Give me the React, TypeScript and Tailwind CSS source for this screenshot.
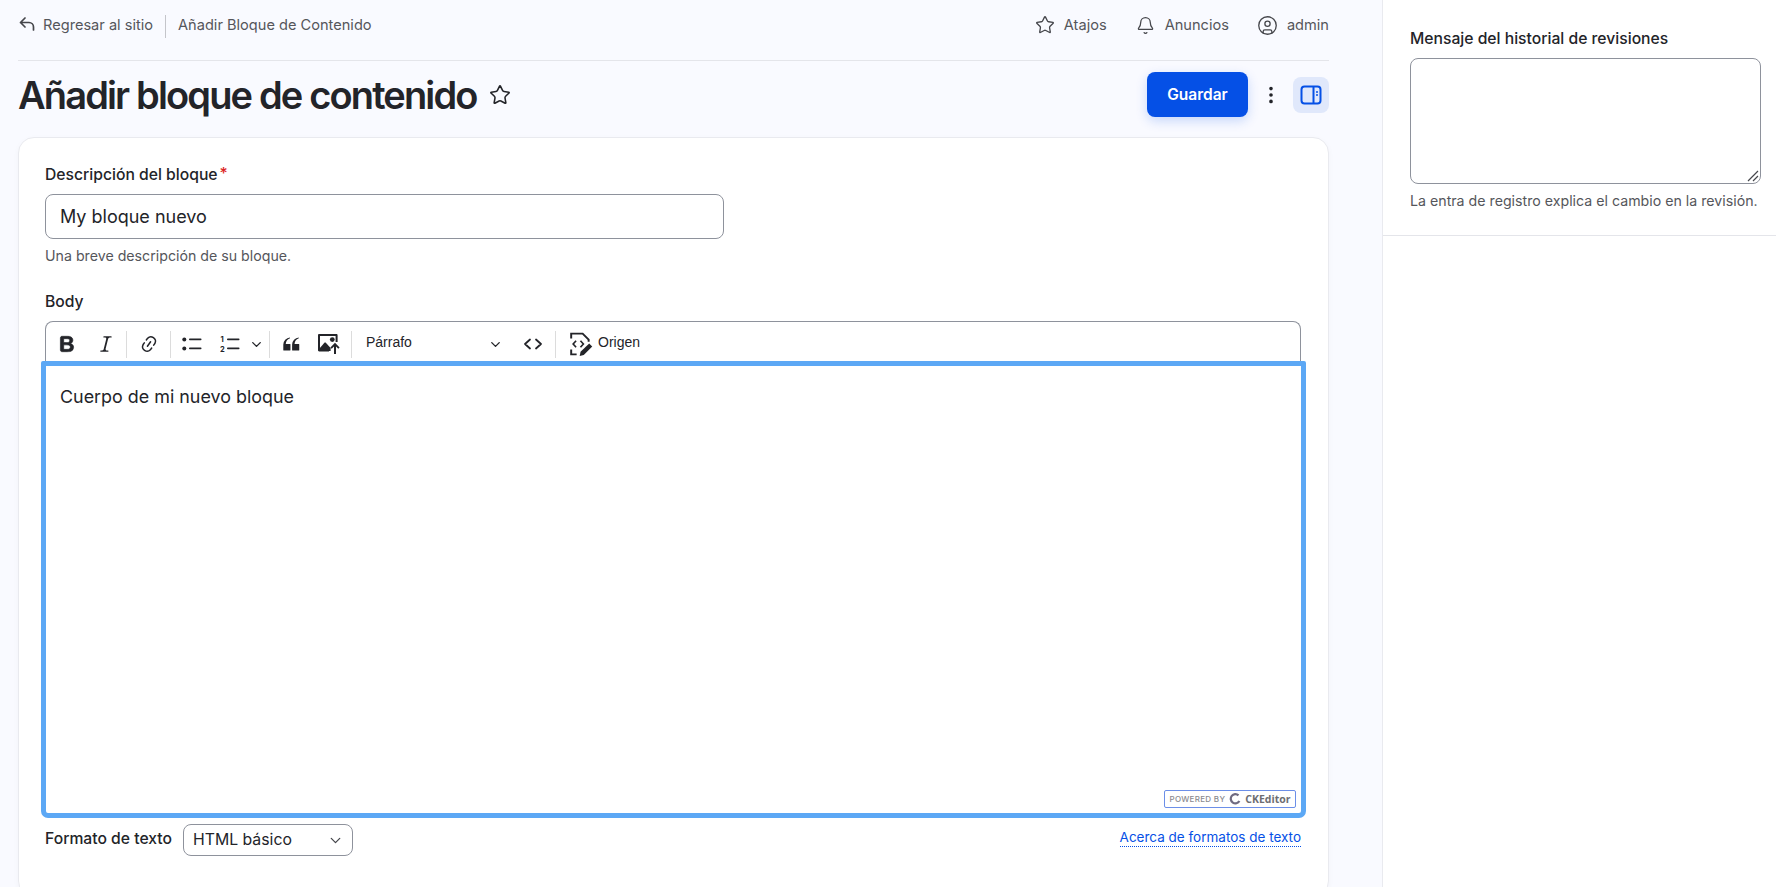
import { Bell, ChevronDown, CircleUser, EllipsisVertical, Star } from 'lucide-react'

function ToolbarSep() {
  return <div className="w-px h-[27px] bg-[#dcdcdc]" />
}

function BackIcon() {
  return (
    <svg viewBox="0 0 16 14" fill="none" className="w-[16px] h-[14px] stroke-[#45464b]" strokeWidth={1.7} strokeLinecap="round" strokeLinejoin="round">
      <path d="M6 1 1.500 5.500 6 10M1.500 5.500H10a4.500 4.500 0 0 1 4.500 4.500V13" />
    </svg>
  )
}

function BoldIcon() {
  return (
    <svg viewBox="0 0 20 20" className="w-[22px] h-[22px] fill-[#232429]" strokeWidth={0.6} stroke="#232429">
      <path d="M10.187 17H5.773c-.637 0-1.092-.138-1.364-.415-.273-.277-.409-.718-.409-1.323V4.738c0-.617.14-1.062.419-1.332.279-.27.73-.406 1.354-.406h4.68c.69 0 1.288.041 1.793.124.506.083.96.242 1.36.478.341.197.644.447.906.75a3.262 3.262 0 0 1 .808 2.162c0 1.401-.722 2.426-2.167 3.075C15.05 10.175 16 11.315 16 13.01a3.756 3.756 0 0 1-2.296 3.504 6.1 6.1 0 0 1-1.517.377c-.571.073-1.238.11-2 .11zm-.217-6.217H7v4.087h3.069c1.977 0 2.965-.69 2.965-2.072 0-.707-.256-1.22-.768-1.537-.512-.319-1.277-.478-2.296-.478zM7 5.13v3.619h2.606c.729 0 1.292-.067 1.69-.2a1.6 1.6 0 0 0 .91-.765c.165-.267.247-.566.247-.897 0-.707-.26-1.176-.778-1.409-.519-.232-1.31-.348-2.375-.348H7z" />
    </svg>
  )
}

function ItalicIcon() {
  return (
    <svg viewBox="0 0 20 20" className="w-[22px] h-[22px] fill-[#232429]">
      <path d="m9.586 14.633.021.004c-.036.335.095.655.393.962.082.083.173.15.274.201h1.474a.6.6 0 1 1 0 1.2H5.304a.6.6 0 0 1 0-1.2h1.15c.474-.07.809-.182 1.005-.334.157-.122.291-.32.404-.597l2.416-9.55a1.053 1.053 0 0 0-.281-.823 1.12 1.12 0 0 0-.442-.296H8.15a.6.6 0 0 1 0-1.2h6.443a.6.6 0 1 1 0 1.2h-1.195c-.376.056-.65.155-.823.296-.215.175-.423.439-.623.79l-2.366 9.347z" />
    </svg>
  )
}

function LinkIcon() {
  return (
    <svg viewBox="0 0 20 20" className="w-[20px] h-[20px] fill-[#232429]">
      <path d="m11.077 15 .991-1.416a.75.75 0 1 1 1.229.86l-1.148 1.64a.748.748 0 0 1-.217.206 5.251 5.251 0 0 1-8.503-5.955.741.741 0 0 1 .12-.274l1.147-1.639a.75.75 0 1 1 1.228.86L4.933 10.7l.006.003a3.75 3.75 0 0 0 6.132 4.294l.006.004zm5.494-5.335a.748.748 0 0 1-.12.274l-1.147 1.639a.75.75 0 1 1-1.228-.86l.86-1.23a3.75 3.75 0 0 0-6.144-4.301l-.86 1.229a.75.75 0 0 1-1.229-.86l1.148-1.64a.748.748 0 0 1 .217-.206 5.251 5.251 0 0 1 8.503 5.955zm-4.563-2.532a.75.75 0 0 1 .184 1.045l-3.155 4.505a.75.75 0 1 1-1.229-.86l3.155-4.506a.75.75 0 0 1 1.045-.184z" />
    </svg>
  )
}

function BulletIcon() {
  return (
    <svg viewBox="0 0 20 20" className="w-[20px] h-[20px] fill-[#232429]">
      <circle cx="2.3" cy="5.5" r="2" />
      <circle cx="2.3" cy="14.5" r="2" />
      <rect x="7" y="4.6" width="12.5" height="1.7" rx=".8" />
      <rect x="7" y="13.6" width="12.5" height="1.7" rx=".8" />
    </svg>
  )
}

function NumberedIcon() {
  return (
    <svg viewBox="0 0 20 20" className="w-[20px] h-[20px] fill-[#232429]">
      <text x="0.5" y="8" fontSize="7.5" fontWeight="700" fontFamily="Inter, sans-serif">1</text>
      <text x="0" y="18" fontSize="7.5" fontWeight="700" fontFamily="Inter, sans-serif">2</text>
      <rect x="7" y="4.6" width="12.5" height="1.7" rx=".8" />
      <rect x="7" y="13.6" width="12.5" height="1.7" rx=".8" />
    </svg>
  )
}

function QuoteIcon() {
  return (
    <svg viewBox="0 0 20 20" className="w-[22px] h-[22px] fill-[#232429]">
      <path d="M3 10.423a6.5 6.5 0 0 1 6.056-6.408l.038.67C6.448 5.423 5.354 7.663 5.22 10H9c.552 0 .5.432.5.986v4.511c0 .554-.448.503-1 .503h-5c-.552 0-.5-.449-.5-1.003v-4.574zm8 0a6.5 6.5 0 0 1 6.056-6.408l.038.67c-2.646.739-3.74 2.979-3.873 5.315H17c.552 0 .5.432.5.986v4.511c0 .554-.448.503-1 .503h-5c-.552 0-.5-.449-.5-1.003v-4.574z" />
    </svg>
  )
}

function ImageUploadIcon() {
  return (
    <svg viewBox="0 0 22 20" className="w-[22px] h-[20px] fill-[#232429]">
      <path d="M1.2 0C.5 0 0 .5 0 1.2v15.1c0 .7.5 1.2 1.2 1.2H11v-2H2V2h15.6v6h2V1.2c0-.7-.5-1.2-1.2-1.2H1.2z" />
      <path d="M1.5 14.5 6.6 8.6c.3-.3.7-.3 1 0l5 5.4v3H1.5z" />
      <circle cx="14.3" cy="5.6" r="2.4" />
      <path d="M17 8.8l4.6 4.8-1.3 1.2-2.3-2.4V20h-2v-7.6l-2.3 2.4-1.3-1.2z" />
    </svg>
  )
}

function CodeIcon() {
  return (
    <svg viewBox="0 0 20 20" fill="none" className="w-[20px] h-[20px] stroke-[#232429]" strokeWidth={1.8} strokeLinecap="round" strokeLinejoin="round">
      <path d="M7 5.5 2 10l5 4.5M13 5.5l5 4.5-5 4.5" />
    </svg>
  )
}

function SourceIcon() {
  return (
    <svg viewBox="0 0 22 22" fill="none" className="w-[24px] h-[24px]">
      <path d="M2 6V1.500h10.500L18 7v2M2 16v4.500h5" stroke="#232429" strokeWidth="1.8" />
      <path d="M6.500 8 3.800 11l2.700 3M10.500 8l2.700 3-2.700 3" stroke="#232429" strokeWidth="1.500" />
      <path d="M18.500 10.500l2.800 2.800-7.800 7.800-3.700.8.800-3.700z" fill="#232429" />
    </svg>
  )
}

function PanelIcon() {
  return (
    <svg viewBox="0 0 22 22" fill="none" className="w-[22px] h-[22px] stroke-[#0550e6]" strokeWidth={2}>
      <rect x="1.5" y="2.500" width="19" height="17" rx="3" />
      <path d="M13.500 2.500v17" />
      <path d="M16 8h2M16 11h2" strokeWidth={1.6} />
    </svg>
  )
}

function CkLogo() {
  return (
    <svg viewBox="0 0 12 12" fill="none" className="w-[12px] h-[12px]">
      <path d="M9.500 2.400A4.600 4.600 0 1 0 10.400 8" stroke="#6f6a80" strokeWidth="2.200" />
    </svg>
  )
}

export default function App() {
  return (
    <div className="flex h-[887px] overflow-hidden bg-white text-[#232429] font-['Inter',sans-serif]">
      <main className="w-[1382px] shrink-0 bg-[#f9faff] pl-[18px] pr-[53px]">
        <div className="flex items-center justify-between h-[61px] pb-[8px] border-b border-[#e4e5ea] text-[14.6px] text-[#55565b]">
          <div className="flex items-center">
            <span className="mr-[8px] ml-[1px] -mt-[5px]"><BackIcon /></span>
            <span>Regresar al sitio</span>
            <div className="w-px h-[23px] bg-[#c4c5ca] mx-[12px]" />
            <span className="-mt-[1px]">Añadir Bloque de Contenido</span>
          </div>
          <div className="flex items-center">
            <Star size={20} strokeWidth={1.6} className="text-[#45464b] mr-[9px] -mt-[1px]" />
            <span>Atajos</span>
            <Bell size={19} strokeWidth={1.6} className="text-[#45464b] ml-[29px] mr-[10px] -mt-[1px]" />
            <span>Anuncios</span>
            <CircleUser size={21} strokeWidth={1.5} className="text-[#45464b] ml-[28px] mr-[9px] -mt-[1px]" />
            <span>admin</span>
          </div>
        </div>

        <div className="flex items-center h-[67px] mb-[9px]">
          <h1 className="text-[38px] leading-none font-semibold tracking-[-1.85px]">Añadir bloque de contenido</h1>
          <Star size={22} strokeWidth={1.7} className="ml-[12px] text-[#232429]" />
          <button className="ml-auto w-[101px] h-[45px] rounded-[8px] bg-[#0550e6] text-white text-[15.500px] font-semibold shadow-[0_4px_12px_rgba(5,80,230,0.2)]">
            Guardar
          </button>
          <EllipsisVertical size={22} strokeWidth={2} className="ml-[12px] text-[#232429]" />
          <div className="ml-[11px] w-[36px] h-[36px] rounded-[8px] bg-[#e0e8fb] flex items-center justify-center">
            <PanelIcon />
          </div>
        </div>

        <section className="h-[760px] rounded-[16px] bg-white border border-[#e9eaef] shadow-[0_2px_6px_rgba(0,0,50,0.03)] px-[26px] pt-[27px]">
          <label className="flex text-[15.700px] leading-[20px] font-medium">
            Descripción del bloque<span className="ml-[2px] text-[#dc2323] leading-[18px]">*</span>
          </label>
          <div className="mt-[9px] w-[679px] h-[45px] rounded-[8px] border border-[#8e929c] bg-white flex items-center px-[14px] text-[18px]">
            My bloque nuevo
          </div>
          <p className="mt-[8px] text-[14.200px] leading-[18px] text-[#55565b]">Una breve descripción de su bloque.</p>

          <label className="block mt-[27px] text-[15.700px] leading-[20px] font-medium">Body</label>

          <div className="mt-[9px] w-[1256px] h-[40px] pt-[5px] rounded-t-[8px] border border-b-0 border-[#8e929c] bg-white flex items-center">
            <div className="w-[10px]" />
            <BoldIcon />
            <div className="w-[17px]" />
            <ItalicIcon />
            <div className="w-[9px]" />
            <ToolbarSep />
            <div className="w-[12px]" />
            <LinkIcon />
            <div className="w-[11px]" />
            <ToolbarSep />
            <div className="w-[11px]" />
            <BulletIcon />
            <div className="w-[18px]" />
            <NumberedIcon />
            <ChevronDown size={15} strokeWidth={2.2} className="ml-[9px] mr-[5px]" />
            <ToolbarSep />
            <div className="w-[10px]" />
            <QuoteIcon />
            <div className="w-[16px]" />
            <ImageUploadIcon />
            <div className="w-[11px]" />
            <ToolbarSep />
            <div className="w-[14px] " />
            <span className="w-[122px] -mt-[4px] text-[14px] font-['Liberation_Sans',sans-serif]">Párrafo</span>
            <ChevronDown size={15} strokeWidth={2.2} />
            <div className="w-[20px]" />
            <CodeIcon />
            <div className="w-[12px]" />
            <ToolbarSep />
            <div className="w-[13px]" />
            <SourceIcon />
            <span className="ml-[5px] -mt-[4px] text-[14px] font-['Liberation_Sans',sans-serif]">Origen</span>
          </div>

          <div className="relative -mx-[4px] h-[457px] rounded-b-[7px] rounded-t-[2px] border-[5px] border-[#5ca8f5] bg-white px-[14px] pt-[18px] text-[17.900px] leading-[26px]">
            Cuerpo de mi nuevo bloque
            <div className="absolute right-[5px] bottom-[5px] w-[132px] h-[18px] rounded-[2px] border border-[#6c8fe8] bg-white flex items-center justify-center gap-[4px]">
              <span className="text-[8px] font-medium tracking-[0.3px] text-[#8a8a8f]">POWERED BY</span>
              <CkLogo />
              <span className="text-[10.500px] font-bold text-[#6d6d72] font-['Open_Sans',sans-serif]">CKEditor</span>
            </div>
          </div>

          <div className="flex items-start justify-between w-[1256px] mt-[6px]">
            <div className="flex items-center">
              <span className="text-[15.700px] font-medium mr-[11px] -mt-[2px]">Formato de texto</span>
              <div className="w-[170px] h-[32px] rounded-[8px] border border-[#8e929c] bg-white flex items-center justify-between pl-[9px] pr-[8px] text-[15.800px]">
                HTML básico
                <ChevronDown size={17} strokeWidth={1.8} className="text-[#45464b]" />
              </div>
            </div>
            <a className="mt-[5px] text-[13.500px] text-[#0550e6] border-b border-dotted border-[#0550e6] leading-[17px]">
              Acerca de formatos de texto
            </a>
          </div>
        </section>
      </main>

      <aside className="flex-1 border-l border-[#e9eaef]">
        <div className="h-[236px] border-b border-[#e4e5ea] pl-[27px] pr-[15px] pt-[29px]">
          <label className="block text-[15.700px] leading-[20px] font-medium">Mensaje del historial de revisiones</label>
          <div className="relative mt-[9px] h-[126px] rounded-[8px] border border-[#8e929c] bg-white">
            <svg viewBox="0 0 12 12" fill="none" className="absolute right-[1px] bottom-[1px] w-[12px] h-[12px] stroke-[#45464b]" strokeWidth={1.2}>
              <path d="M1 11 11 1M6 11l5-5" />
            </svg>
          </div>
          <p className="mt-[8px] text-[14.200px] leading-[18px] text-[#55565b] whitespace-nowrap">La entra de registro explica el cambio en la revisión.</p>
        </div>
      </aside>
    </div>
  )
}
